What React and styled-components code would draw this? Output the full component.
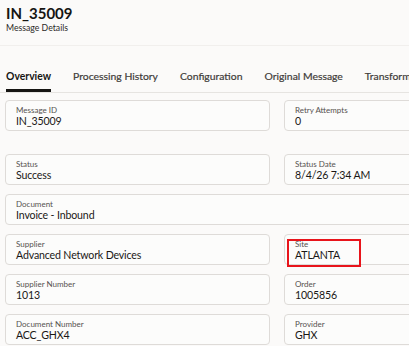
import React from "react";
import styled, { createGlobalStyle } from "styled-components";

const GlobalStyle = createGlobalStyle`
  html, body {
    margin: 0;
    padding: 0;
    background: #fbfaf9;
    font-family: Lato, "Noto Sans", sans-serif;
    color: #1f1d1b;
    overflow: hidden;
  }
`;

const Page = styled.div`
  width: 409px;
  height: 346px;
  overflow: hidden;
`;

const Header = styled.header`
  height: 46px;
  padding: 4px 6px 0;
  box-sizing: border-box;
  border-bottom: 1px solid #f1efed;
`;

const Title = styled.h1`
  margin: 0;
  font-size: 15px;
  line-height: 18px;
  font-weight: 700;
  color: #161513;
`;

const Subtitle = styled.div`
  font-size: 8.7px;
  line-height: 12px;
  margin-top: 0;
  color: #2b2927;
`;

const TabBar = styled.nav`
  display: flex;
  gap: 22px;
  margin-top: 14px;
  padding-left: 6px;
  height: 32px;
  border-bottom: 1px solid #e6e4e1;
  white-space: nowrap;
`;

const Tab = styled.div`
  position: relative;
  display: flex;
  align-items: center;
  font-size: 10.4px;
  font-weight: ${(p) => (p.$active ? 700 : 400)};
  color: ${(p) => (p.$active ? "#161513" : "#3f3c39")};
  -webkit-text-stroke: ${(p) => (p.$active ? "0" : "0.2px")};

  &::after {
    content: "";
    display: ${(p) => (p.$active ? "block" : "none")};
    position: absolute;
    left: 0;
    right: 0;
    bottom: 0;
    height: 3px;
    background: #161513;
  }
`;

const Fields = styled.div`
  display: grid;
  grid-template-columns: 265px 265px;
  column-gap: 14px;
  row-gap: 9px;
  padding: 7px 0 0 5px;
  width: 560px;
`;

const Field = styled.div`
  position: relative;
  grid-column: ${(p) => (p.$wide ? "1 / span 2" : "auto")};
  margin-bottom: ${(p) => (p.$spaced ? "14px" : "0")};
  height: 31px;
  box-sizing: border-box;
  padding: 4px 10px 0;
  border: 1px solid #dedbd8;
  border-radius: 4px;
  background: #fcfcfb;
`;

const Label = styled.div`
  font-size: 8px;
  line-height: 10px;
  color: #56524f;
`;

const Value = styled.div`
  font-size: 10.6px;
  line-height: 13px;
  letter-spacing: -0.15px;
  color: #1a1816;
`;

const Highlight = styled.div`
  position: absolute;
  left: 2px;
  top: 4px;
  width: 74px;
  height: 28px;
  box-sizing: border-box;
  border: 2px solid #e8141b;
`;

const tabs = [
  "Overview",
  "Processing History",
  "Configuration",
  "Original Message",
  "Transformed Message",
];

const fields = [
  { label: "Message ID", value: "IN_35009", spaced: true },
  { label: "Retry Attempts", value: "0", spaced: true },
  { label: "Status", value: "Success" },
  { label: "Status Date", value: "8/4/26 7:34 AM" },
  { label: "Document", value: "Invoice - Inbound", wide: true },
  { label: "Supplier", value: "Advanced Network Devices" },
  { label: "Site", value: "ATLANTA", mark: true },
  { label: "Supplier Number", value: "1013" },
  { label: "Order", value: "1005856" },
  { label: "Document Number", value: "ACC_GHX4" },
  { label: "Provider", value: "GHX" },
];

export default function App() {
  return (
    <Page>
      <GlobalStyle />
      <Header>
        <Title>IN_35009</Title>
        <Subtitle>Message Details</Subtitle>
      </Header>
      <TabBar>
        {tabs.map((t, i) => (
          <Tab key={t} $active={i === 0}>
            {t}
          </Tab>
        ))}
      </TabBar>
      <Fields>
        {fields.map((f) => (
          <Field key={f.label} $wide={f.wide} $spaced={f.spaced}>
            <Label>{f.label}</Label>
            <Value>{f.value}</Value>
            {f.mark && <Highlight />}
          </Field>
        ))}
      </Fields>
    </Page>
  );
}
